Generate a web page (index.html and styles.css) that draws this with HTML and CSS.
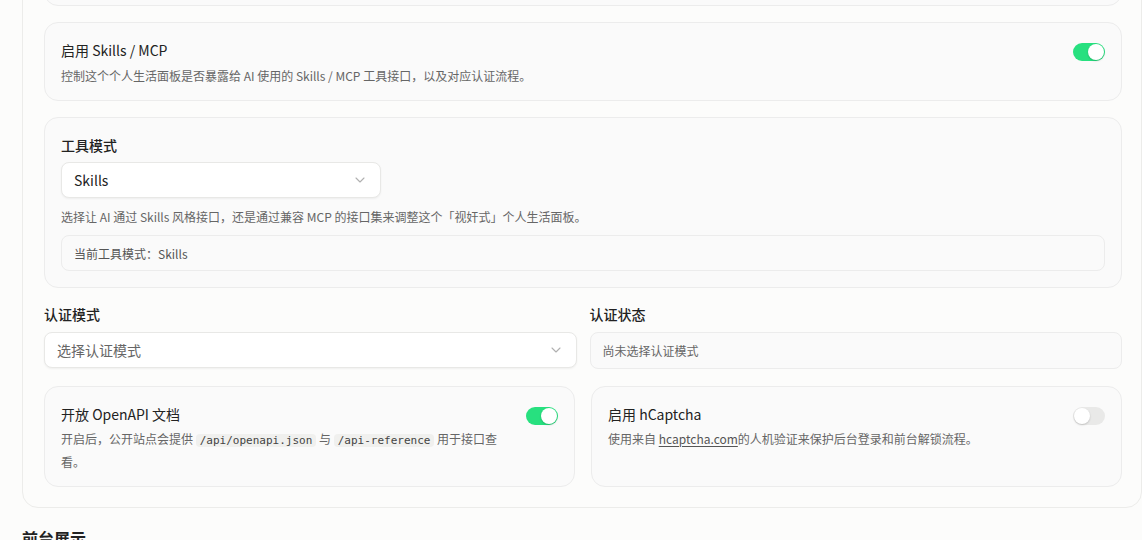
FILE: index.html
```html
<!DOCTYPE html>
<html lang="zh-CN">
<head>
<meta charset="utf-8">
<title>设置</title>
<link rel="stylesheet" href="styles.css">
</head>
<body>
<div class="page">
  <section class="outer">
    <div class="card prev"></div>

    <div class="card row first">
      <div class="text">
        <div class="title">启用 Skills / MCP</div>
        <div class="desc single">控制这个个人生活面板是否暴露给 AI 使用的 Skills / MCP 工具接口，以及对应认证流程。</div>
      </div>
      <span class="toggle on"><span class="knob"></span></span>
    </div>

    <div class="card tools">
      <div class="label">工具模式</div>
      <div class="select small">
        <span class="value">Skills</span>
        <svg class="chev" width="12" height="8" viewBox="0 0 12 8"><path d="M2 2 L6 6 L10 2" fill="none" stroke="#b0b0b0" stroke-width="1.1" stroke-linecap="round" stroke-linejoin="round"/></svg>
      </div>
      <div class="desc hint">选择让 AI 通过 Skills 风格接口，还是通过兼容 MCP 的接口集来调整这个「视奸式」个人生活面板。</div>
      <div class="info">当前工具模式：Skills</div>
    </div>

    <div class="grid fields">
      <div class="field">
        <div class="label">认证模式</div>
        <div class="select">
          <span class="placeholder">选择认证模式</span>
          <svg class="chev" width="12" height="8" viewBox="0 0 12 8"><path d="M2 2 L6 6 L10 2" fill="none" stroke="#b0b0b0" stroke-width="1.1" stroke-linecap="round" stroke-linejoin="round"/></svg>
        </div>
      </div>
      <div class="field">
        <div class="label">认证状态</div>
        <div class="status">尚未选择认证模式</div>
      </div>
    </div>

    <div class="grid cards">
      <div class="card row tall">
        <div class="text">
          <div class="title">开放 OpenAPI 文档</div>
          <div class="desc multi">开启后，公开站点会提供 <code>/api/openapi.json</code> 与 <code>/api-reference</code> 用于接口查看。</div>
        </div>
        <span class="toggle on"><span class="knob"></span></span>
      </div>
      <div class="card row tall">
        <div class="text">
          <div class="title">启用 hCaptcha</div>
          <div class="desc multi">使用来自 <a href="#">hcaptcha.com</a>的人机验证来保护后台登录和前台解锁流程。</div>
        </div>
        <span class="toggle"><span class="knob"></span></span>
      </div>
    </div>
  </section>

  <h2 class="section-title">前台展示</h2>
</div>
</body>
</html>
```

FILE: styles.css
```css
* { box-sizing: border-box; }

html, body {
  margin: 0;
  padding: 0;
  background: #fcfcfb;
  font-family: "Noto Sans CJK SC", "Noto Sans", sans-serif;
  color: #222;
  overflow: hidden;
}

.page {
  margin-top: -59px;
  padding-left: 22px;
}

.outer {
  width: 1120px;
  border: 1px solid #ececea;
  border-radius: 16px;
  background: #fcfcfb;
  padding: 21px 19px 20px 21px;
  display: flex;
  flex-direction: column;
  gap: 16px;
}

.card {
  background: #fafafa;
  border: 1px solid #ececec;
  border-radius: 14px;
  padding: 16px;
}

.prev {
  height: 43px;
}

.row {
  display: flex;
  align-items: flex-start;
  justify-content: space-between;
  gap: 24px;
}

.first { padding-bottom: 14px; }

.text { flex: 1; min-width: 0; }

.title {
  font-size: 14px;
  line-height: 22px;
  color: #222;
}

.desc {
  font-size: 12px;
  line-height: 20px;
  color: #666;
}

.desc.single { margin-top: 5px; }

.desc.multi {
  line-height: 21px;
  margin-top: 3px;
}

.toggle {
  flex: none;
  position: relative;
  width: 32px;
  height: 18px;
  border-radius: 9px;
  background: #e9e9e8;
  margin-top: 4px;
}
.toggle.on { background: #27e07f; }

.knob {
  position: absolute;
  top: 1px;
  left: 1px;
  width: 16px;
  height: 16px;
  border-radius: 50%;
  background: #fff;
  box-shadow: 0 1px 2px rgba(0,0,0,0.18);
}
.toggle.on .knob { left: 15px; }

.label {
  font-size: 14px;
  line-height: 22px;
  font-weight: 500;
  color: #222;
}

.tools .label { margin-bottom: 6px; }

.select {
  height: 36px;
  background: #fff;
  border: 1px solid #e8e8e6;
  border-radius: 8px;
  box-shadow: 0 1px 2px rgba(0,0,0,0.05);
  display: flex;
  align-items: center;
  justify-content: space-between;
  padding: 0 14px 0 12px;
  font-size: 14px;
}
.select.small { width: 320px; }
.select .value { color: #222; }
.select .placeholder { color: #666; }
.chev { display: block; }

.hint { margin-top: 9px; }

.info {
  margin-top: 8px;
  height: 36px;
  border: 1px solid #ececec;
  border-radius: 8px;
  background: #fafafa;
  font-size: 12px;
  color: #555;
  display: flex;
  align-items: center;
  padding: 0 12px;
}

.grid {
  display: grid;
  grid-template-columns: 1fr 1fr;
}
.fields { column-gap: 13px; }
.cards { column-gap: 16px; margin-top: 1px; }

.field .label { line-height: 20px; margin-bottom: 8px; }

.status {
  height: 37px;
  border: 1px solid #ececec;
  border-radius: 8px;
  background: #fafafa;
  font-size: 12px;
  color: #666;
  display: flex;
  align-items: center;
  padding: 0 12px;
}

.tall { height: 101px; }

code {
  font-family: "DejaVu Sans Mono", "Liberation Mono", monospace;
  font-size: 11px;
  background: #f0f0ee;
  color: #444;
  border-radius: 4px;
  padding: 0 4px;
}

a {
  color: #555;
  text-decoration: underline;
  text-underline-offset: 2px;
}

.section-title {
  margin: 18px 0 0;
  font-size: 16px;
  line-height: 24px;
  font-weight: 700;
  color: #222;
}
```
